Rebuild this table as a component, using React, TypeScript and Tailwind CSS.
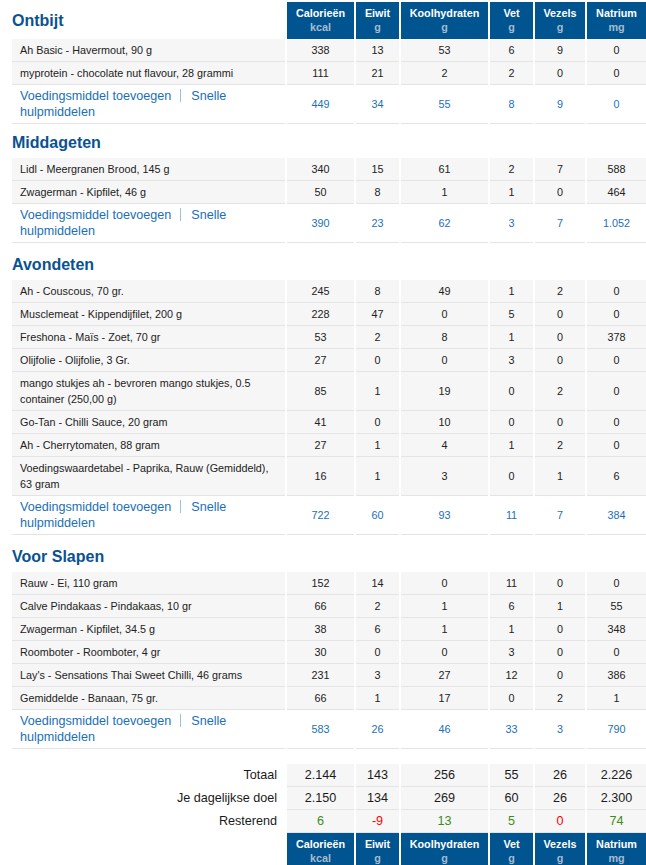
import React from "react";

type Row = [string, number | string, number | string, number | string, number | string, number | string, number | string];

const sections: { name: string; items: Row[]; totals: (number | string)[] }[] = [
  {
    name: "Ontbijt",
    items: [
      ["Ah Basic - Havermout, 90 g", 338, 13, 53, 6, 9, 0],
      ["myprotein - chocolate nut flavour, 28 grammi", 111, 21, 2, 2, 0, 0],
    ],
    totals: [449, 34, 55, 8, 9, 0],
  },
  {
    name: "Middageten",
    items: [
      ["Lidl - Meergranen Brood, 145 g", 340, 15, 61, 2, 7, 588],
      ["Zwagerman - Kipfilet, 46 g", 50, 8, 1, 1, 0, 464],
    ],
    totals: [390, 23, 62, 3, 7, "1.052"],
  },
  {
    name: "Avondeten",
    items: [
      ["Ah - Couscous, 70 gr.", 245, 8, 49, 1, 2, 0],
      ["Musclemeat - Kippendijfilet, 200 g", 228, 47, 0, 5, 0, 0],
      ["Freshona - Maïs - Zoet, 70 gr", 53, 2, 8, 1, 0, 378],
      ["Olijfolie - Olijfolie, 3 Gr.", 27, 0, 0, 3, 0, 0],
      ["mango stukjes ah - bevroren mango stukjes, 0.5 container (250,00 g)", 85, 1, 19, 0, 2, 0],
      ["Go-Tan - Chilli Sauce, 20 gram", 41, 0, 10, 0, 0, 0],
      ["Ah - Cherrytomaten, 88 gram", 27, 1, 4, 1, 2, 0],
      ["Voedingswaardetabel - Paprika, Rauw (Gemiddeld), 63 gram", 16, 1, 3, 0, 1, 6],
    ],
    totals: [722, 60, 93, 11, 7, 384],
  },
  {
    name: "Voor Slapen",
    items: [
      ["Rauw - Ei, 110 gram", 152, 14, 0, 11, 0, 0],
      ["Calve Pindakaas - Pindakaas, 10 gr", 66, 2, 1, 6, 1, 55],
      ["Zwagerman - Kipfilet, 34.5 g", 38, 6, 1, 1, 0, 348],
      ["Roomboter - Roomboter, 4 gr", 30, 0, 0, 3, 0, 0],
      ["Lay's - Sensations Thai Sweet Chilli, 46 grams", 231, 3, 27, 12, 0, 386],
      ["Gemiddelde - Banaan, 75 gr.", 66, 1, 17, 0, 2, 1],
    ],
    totals: [583, 26, 46, 33, 3, 790],
  },
];

const headers: [string, string][] = [
  ["Calorieën", "kcal"],
  ["Eiwit", "g"],
  ["Koolhydraten", "g"],
  ["Vet", "g"],
  ["Vezels", "g"],
  ["Natrium", "mg"],
];

const grid = "grid grid-cols-[273px_67px_43px_87px_43px_50px_59px] gap-x-[2px]";

function HeaderCells() {
  return (
    <>
      {headers.map(([t, u]) => (
        <div
          key={t}
          className="bg-[#00548f] flex flex-col items-center pt-[4px] pb-[5px] text-[10.8px] font-bold leading-[14px]"
        >
          <span className="text-white">{t}</span>
          <span className="text-[#a7bbd0]">{u}</span>
        </div>
      ))}
    </>
  );
}

function Section({ s, index }: { s: (typeof sections)[number]; index: number }) {
  return (
    <>
      <div className={grid}>
        {index === 0 ? (
          <>
            <div className="flex items-center text-[16px] font-bold text-[#0a5291] leading-[20px]">{s.name}</div>
            <HeaderCells />
          </>
        ) : (
          <>
            <div
              className={
                "flex items-end pb-[5px] text-[16px] font-bold text-[#0a5291] leading-[20px] " +
                (index === 1 ? "h-[34px]" : "h-[37px]")
              }
            >
              {s.name}
            </div>
            <div />
            <div />
            <div />
            <div />
            <div />
            <div />
          </>
        )}
      </div>
      {s.items.map((r, i) => (
        <div key={i} className={grid}>
          <div className="bg-[#f6f6f6] border-b border-[#e4e4e4] pl-[8px] pr-[8px] py-[3px] leading-[16px] text-[10.8px] text-[#222]">
            {r[0]}
          </div>
          {r.slice(1).map((v, j) => (
            <div
              key={j}
              className="bg-[#f6f6f6] border-b border-[#e4e4e4] flex items-center justify-center text-[10.8px] text-[#222]"
            >
              {v}
            </div>
          ))}
        </div>
      ))}
      <div className={grid}>
        <div className="border-b border-[#e4e4e4] pl-[8px] pr-[8px] py-[3px] leading-[16px] text-[12.6px] text-[#1a6fb5]">
          <span>Voedingsmiddel toevoegen</span>
          <span className="inline-block align-middle w-px h-[13px] bg-[#9cc0dd] ml-[9px] mr-[10px] -mt-[2px]" />
          <span>Snelle</span>
          <br />
          <span>hulpmiddelen</span>
        </div>
        {s.totals.map((v, j) => (
          <div
            key={j}
            className="border-b border-[#e4e4e4] flex items-center justify-center text-[10.8px] text-[#1a6fb5]"
          >
            {v}
          </div>
        ))}
      </div>
    </>
  );
}

function SummaryRow({ label, values, colors }: { label: string; values: string[]; colors?: string[] }) {
  return (
    <div className={grid}>
      <div className="flex items-center justify-end pr-[8px] h-[23px] text-[12.6px] text-[#1a1a1a]">{label}</div>
      {values.map((v, j) => (
        <div
          key={j}
          className={
            "bg-[#f6f6f6] border-b border-[#e4e4e4] flex items-center justify-center text-[12.6px] " +
            (colors ? colors[j] : "text-[#1a1a1a]")
          }
        >
          {v}
        </div>
      ))}
    </div>
  );
}

export default function App() {
  return (
    <div className="w-[646px] bg-white pl-[12px] pt-[2px] font-['Liberation_Sans',Arial,sans-serif] overflow-hidden">
      {sections.map((s, i) => (
        <Section key={s.name} s={s} index={i} />
      ))}
      <div className="h-[15px]" />
      <SummaryRow label="Totaal" values={["2.144", "143", "256", "55", "26", "2.226"]} />
      <SummaryRow label="Je dagelijkse doel" values={["2.150", "134", "269", "60", "26", "2.300"]} />
      <SummaryRow
        label="Resterend"
        values={["6", "-9", "13", "5", "0", "74"]}
        colors={[
          "text-[#3f8a1a]",
          "text-[#ff0000]",
          "text-[#3f8a1a]",
          "text-[#3f8a1a]",
          "text-[#ff0000]",
          "text-[#3f8a1a]",
        ]}
      />
      <div className={grid}>
        <div />
        <HeaderCells />
      </div>
    </div>
  );
}
